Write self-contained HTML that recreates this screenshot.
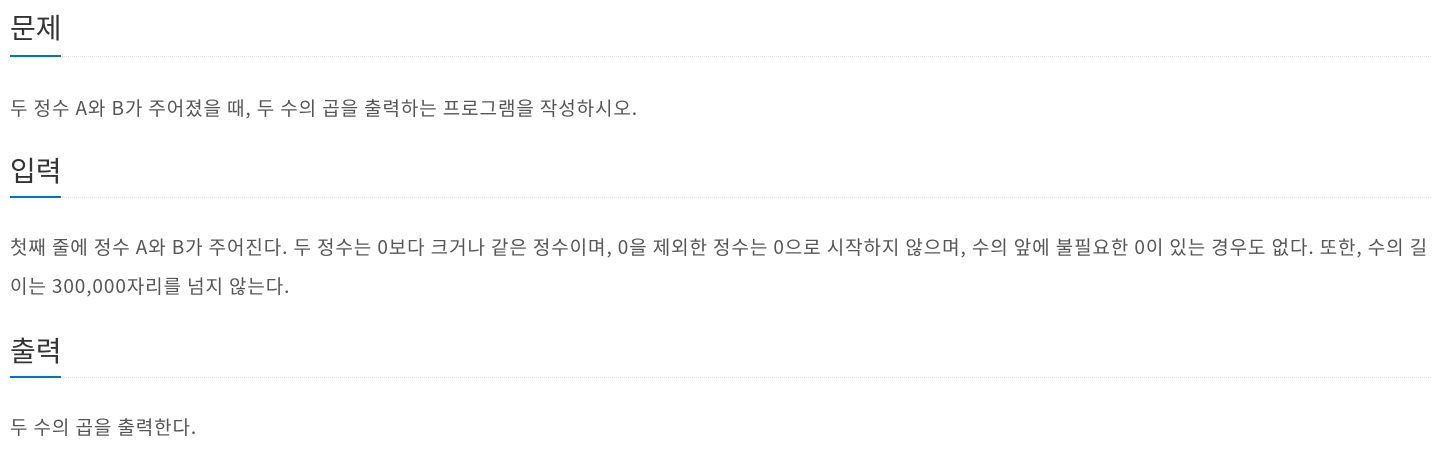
<!DOCTYPE html>
<html><head><meta charset="utf-8"><style>
html,body{margin:0;padding:0;background:#fff;width:1441px;height:460px;overflow:hidden}
body{font-family:"Liberation Sans","Noto Sans CJK KR",sans-serif;color:#555}
.h{position:absolute;left:10px;font-size:28px;color:#333;line-height:30px;white-space:nowrap;font-family:"Noto Sans CJK KR",sans-serif}
.l{position:absolute;left:10px;width:1421px;height:0;border-bottom:1px dotted #e0e0e0}
.b{position:absolute;left:10px;width:51px;height:2px;background:#0076c0}
.p{position:absolute;left:10px;font-size:19px;letter-spacing:0.9px;line-height:39px;white-space:nowrap;font-family:"Noto Sans CJK KR",sans-serif;color:#555}
</style></head><body>
<div class="h" style="top:12px">문제</div>
<div class="l" style="top:56px"></div><div class="b" style="top:55px"></div>
<div class="p" style="top:88px">두 정수 A와 B가 주어졌을 때, 두 수의 곱을 출력하는 프로그램을 작성하시오.</div>

<div class="h" style="top:155px">입력</div>
<div class="l" style="top:197px"></div><div class="b" style="top:196px"></div>
<div class="p" style="top:227px">첫째 줄에 정수 A와 B가 주어진다. 두 정수는 0보다 크거나 같은 정수이며, 0을 제외한 정수는 0으로 시작하지 않으며, 수의 앞에 불필요한 0이 있는 경우도 없다. 또한, 수의 길<br>이는 300,000자리를 넘지 않는다.</div>

<div class="h" style="top:335px">출력</div>
<div class="l" style="top:377px"></div><div class="b" style="top:376px"></div>
<div class="p" style="top:407px">두 수의 곱을 출력한다.</div>
</body></html>
